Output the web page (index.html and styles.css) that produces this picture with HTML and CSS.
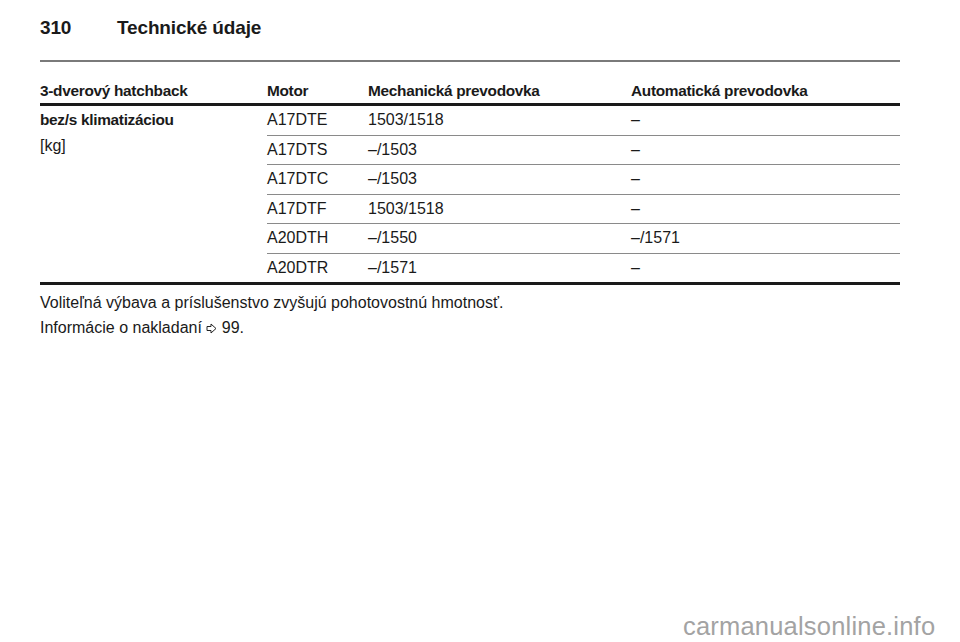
FILE: index.html
```html
<!DOCTYPE html>
<html lang="sk">
<head>
<meta charset="utf-8">
<title>Technické údaje</title>
<link rel="stylesheet" href="styles.css">
</head>
<body>
<div class="page">
  <header class="head">
    <span class="pnum">310</span>
    <span class="ptitle">Technické údaje</span>
  </header>
  <table class="spec">
    <thead>
      <tr>
        <th class="c1">3-dverový hatchback</th>
        <th class="c2">Motor</th>
        <th class="c3">Mechanická prevodovka</th>
        <th class="c4">Automatická prevodovka</th>
      </tr>
    </thead>
    <tbody>
      <tr>
        <td class="lead" rowspan="6"><b>bez/s klimatizáciou</b><br><span class="unit">[kg]</span></td>
        <td>A17DTE</td><td>1503/1518</td><td>–</td>
      </tr>
      <tr><td>A17DTS</td><td>–/1503</td><td>–</td></tr>
      <tr><td>A17DTC</td><td>–/1503</td><td>–</td></tr>
      <tr><td>A17DTF</td><td>1503/1518</td><td>–</td></tr>
      <tr><td>A20DTH</td><td>–/1550</td><td>–/1571</td></tr>
      <tr class="last"><td>A20DTR</td><td>–/1571</td><td>–</td></tr>
    </tbody>
  </table>
  <p class="note">Voliteľná výbava a príslušenstvo zvyšujú pohotovostnú hmotnosť.</p>
  <p class="note">Informácie o nakladaní <svg class="arr" width="11" height="11" viewBox="0 0 11 11"><path d="M1 3.5 H5 V1 L10 5.5 L5 10 V7.5 H1 Z" fill="none" stroke="#222" stroke-width="1" stroke-linejoin="miter"/></svg> 99.</p>
</div>
<div class="wm">carmanualsonline.info</div>
</body>
</html>
```
FILE: styles.css
```css
html, body {
  margin: 0;
  padding: 0;
  background: #fff;
}
body {
  font-family: "Liberation Sans", Arial, sans-serif;
  color: #1a1a1a;
  width: 960px;
  height: 642px;
  overflow: hidden;
  position: relative;
}
.page {
  padding: 0 60px 0 40px;
}
.head {
  display: flex;
  align-items: center;
  border-bottom: 2px solid #7a7a7a;
  box-sizing: border-box;
  height: 62px;
  padding-bottom: 4px;
  font-weight: bold;
  font-size: 19px;
  letter-spacing: -0.15px;
}
.pnum {
  width: 77px;
}
.spec {
  width: 860px;
  border-collapse: separate;
  border-spacing: 0;
  font-size: 16px;
  table-layout: fixed;
}
.spec th {
  text-align: left;
  font-weight: bold;
  font-size: 15.4px;
  letter-spacing: -0.3px;
  padding: 20px 0 4px;
  line-height: 17px;
  border-bottom: 3px solid #1a1a1a;
  white-space: nowrap;
}
.c1 { width: 227px; }
.c2 { width: 101px; }
.c3 { width: 263px; }
.spec td {
  padding: 6px 0;
  line-height: 16.5px;
  border-bottom: 1px solid #8a8a8a;
  vertical-align: top;
  white-space: nowrap;
}
.spec td.lead {
  border-bottom: 3px solid #1a1a1a;
  line-height: 26px;
  padding-top: 1px;
}
.lead b {
  font-size: 15.4px;
  letter-spacing: -0.3px;
}
.spec tr.last td {
  border-bottom: 3px solid #1a1a1a;
}
.unit {
  font-weight: normal;
}
.note {
  margin: 0;
  font-size: 16px;
  line-height: 25px;
}
.note:first-of-type {
  margin-top: 5px;
}
.arr {
  vertical-align: -1px;
}
.wm {
  position: absolute;
  left: 683px;
  top: 612px;
  font-size: 25.5px;
  color: #a3a3a3;
  letter-spacing: 0.2px;
}
```
